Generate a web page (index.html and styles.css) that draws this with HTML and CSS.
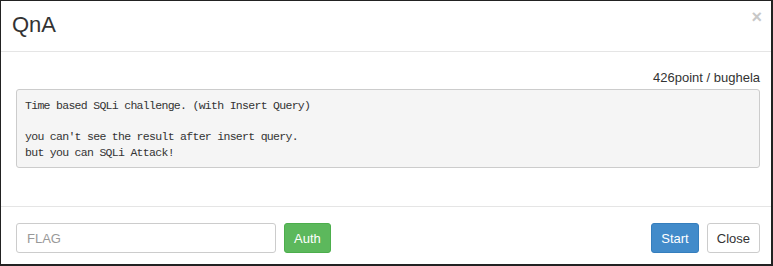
FILE: index.html
```html
<!DOCTYPE html>
<html lang="en">
<head>
    <meta charset="UTF-8">
    <meta name="viewport" content="width=device-width, initial-scale=1.0">
    <title>QnA</title>
    <link rel="stylesheet" href="styles.css">
</head>
<body>

    <div class="modal">
        <div class="modal-header">
            <h3 class="modal-title">QnA</h3>
            <span class="close">&times;</span>
        </div>

        <div class="modal-body">
            <div class="meta">426point / bughela</div>
            <pre class="desc">Time based SQLi challenge. (with Insert Query)

you can't see the result after insert query.
but you can SQLi Attack!</pre>
        </div>

        <!-- flag form + actions -->
        <div class="modal-footer">
            <form class="flag-form">
                <input type="text" class="flag-input" placeholder="FLAG">
                <button type="button" class="btn btn-success">Auth</button>
            </form>
            <div class="actions">
                <button type="button" class="btn btn-primary">Start</button>
                <button type="button" class="btn btn-default">Close</button>
            </div>
        </div>
    </div>

</body>
</html>
```

FILE: styles.css
```css
body { margin: 0; font-family: "Liberation Sans", Arial, sans-serif; color: #333; background: #fff; }
.modal { width: 770px; height: 263px; border: 1px solid #222; border-right-width: 2px; border-bottom-width: 2px; background: #fff; overflow: hidden; }

.modal-header { display: flex; justify-content: space-between; align-items: flex-start; height: 50px; padding: 0 9px 0 11px; border-bottom: 1px solid #e5e5e5; }
.modal-title { margin: 0; padding-top: 11px; font-size: 22px; font-weight: normal; line-height: 26px; color: #333; }
.close { margin-top: 6px; font-size: 18px; font-weight: bold; color: #c8c8c8; line-height: 20px; }

.modal-body { height: 154px; padding: 0 11px 0 15px; }
.meta { text-align: right; font-size: 13px; line-height: 16px; padding-top: 18px; margin-bottom: 3px; }
.desc { margin: 0; padding: 8px 8px 7px; background: #f5f5f5; border: 1px solid #ccc; border-radius: 3px; font-family: "Liberation Mono", Consolas, monospace; font-size: 11.5px; letter-spacing: -0.7px; line-height: 15.5px; color: #333; }

.modal-footer { display: flex; justify-content: space-between; align-items: center; padding: 16px 11px 0 15px; border-top: 1px solid #e5e5e5; }
.flag-form { display: flex; gap: 8px; }
.flag-input { width: 260px; height: 30px; box-sizing: border-box; padding: 4px 10px; border: 1px solid #ccc; border-radius: 3px; font-family: inherit; font-size: 13px; color: #555; }
.flag-input::placeholder { color: #999; }
.actions { display: flex; gap: 8px; }
.btn { height: 30px; padding: 0 9px; border: 1px solid transparent; border-radius: 3px; font-family: inherit; font-size: 13px; cursor: pointer; }
.btn-success { background: #5cb85c; border-color: #4cae4c; color: #fff; }
.btn-primary { background: #428bca; border-color: #357ebd; color: #fff; }
.btn-default { background: #fff; border-color: #ccc; color: #333; }
```
